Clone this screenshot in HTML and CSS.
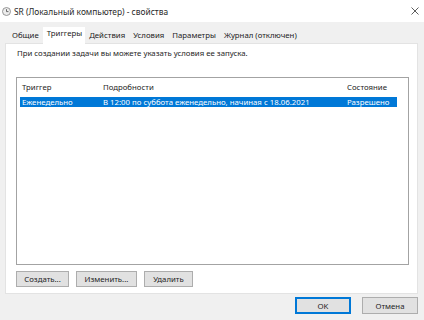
FILE: index.html
```html
<!DOCTYPE html>
<html lang="ru">
<head>
    <meta charset="UTF-8">
    <title>SR (Локальный компьютер) - свойства</title>
    <link rel="stylesheet" href="styles.css">
</head>
<body>
    <div class="window">
        <header class="titlebar">
            <svg class="app-icon" width="9" height="9" viewBox="0 0 9 9">
                <circle cx="4.5" cy="4.5" r="4" fill="#ececec" stroke="#8c8c8c" stroke-width="0.9"/>
                <path d="M4.5 2.2 V4.6 H6.5" fill="none" stroke="#5a5a5a" stroke-width="0.9"/>
            </svg>
            <span class="title">SR (Локальный компьютер) - свойства</span>
            <span class="close">
                <svg width="8" height="8" viewBox="0 0 8 8">
                    <path d="M0.5 0.5 L7.5 7.5 M7.5 0.5 L0.5 7.5" stroke="#333" stroke-width="0.8"/>
                </svg>
            </span>
        </header>

        <div class="content">
            <nav class="tabs">
                <span class="tab">Общие</span>
                <span class="tab active">Триггеры</span>
                <span class="tab">Действия</span>
                <span class="tab">Условия</span>
                <span class="tab">Параметры</span>
                <span class="tab">Журнал (отключен)</span>
            </nav>

            <section class="panel">
                <p class="hint">При создании задачи вы можете указать условия ее запуска.</p>

                <div class="listview">
                    <div class="row head">
                        <span class="col-trigger">Триггер</span>
                        <span class="col-details">Подробности</span>
                        <span class="col-state">Состояние</span>
                    </div>
                    <div class="row selected">
                        <span class="col-trigger">Еженедельно</span>
                        <span class="col-details">В 12:00 по суббота еженедельно, начиная с 18.06.2021</span>
                        <span class="col-state">Разрешено</span>
                    </div>
                </div>

                <div class="actions">
                    <button class="btn btn-create">Создать...</button>
                    <button class="btn btn-edit">Изменить...</button>
                    <button class="btn btn-delete">Удалить</button>
                </div>
            </section>

            <footer class="footer">
                <button class="btn btn-dialog default">OK</button>
                <button class="btn btn-dialog">Отмена</button>
            </footer>
        </div>
    </div>
</body>
</html>
```

FILE: styles.css
```css
/* General Styles */
body {
    margin: 0;
    padding: 0;
    font-family: 'Noto Sans', 'Open Sans', sans-serif;
    font-size: 7.8px;
    color: #1e1e1e;
    background-color: #f0f0f0;
}

.window {
    width: 424px;
    height: 320px;
    overflow: hidden;
    background-color: #f0f0f0;
}

/* Title bar */
.titlebar {
    height: 22px;
    background-color: #ffffff;
    display: flex;
    align-items: center;
    padding-left: 2px;
    box-sizing: border-box;
}

.app-icon {
    margin: 1px 3px 0 0;
}

.title {
    flex: 1;
    font-size: 8.4px;
    color: #2a2a2a;
}

.close {
    width: 8px;
    display: flex;
    margin-right: 5px;
}

/* Tabs */
.content {
    padding: 5px 6px 0 5px;
}

.tabs {
    display: flex;
    height: 16px;
    align-items: flex-end;
    padding-left: 3px;
}

.tab {
    padding: 0 4px;
    height: 14px;
    line-height: 13px;
    color: #222;
}

.tab.active {
    background-color: #ffffff;
    height: 17px;
    line-height: 13px;
    margin-bottom: -1px;
    padding: 0 3px 0 4px;
    position: relative;
    z-index: 1;
}

/* Tab panel */
.panel {
    background-color: #ffffff;
    border: 1px solid #e3e3e3;
    height: 251px;
    box-sizing: border-box;
    padding: 4px 8px 0 10px;
}

.hint {
    margin: 0 0 18px 1px;
    line-height: 11px;
}

.listview {
    height: 188px;
    border: 1px solid #a3a3a3;
    box-sizing: border-box;
    padding: 0 11px 0 3px;
}

.row {
    display: flex;
    white-space: nowrap;
}

.row.head {
    height: 19px;
    line-height: 19px;
}

.row.selected {
    height: 10px;
    line-height: 10px;
    background-color: #0078d7;
    color: #ffffff;
}

.col-trigger {
    width: 81px;
    padding-left: 2px;
}

.col-details {
    flex: 1;
}

.col-state {
    width: 50px;
}

/* Buttons */
.actions {
    display: flex;
    gap: 7px;
    margin-top: 6px;
}

.btn {
    font-family: inherit;
    font-size: 7.8px;
    color: #1e1e1e;
    background-color: #e1e1e1;
    border: 1px solid #adadad;
    height: 16px;
    padding: 0;
    line-height: 14px;
}

.btn-create {
    width: 53px;
}

.btn-edit {
    width: 61px;
}

.btn-delete {
    width: 49px;
}

.footer {
    display: flex;
    justify-content: flex-end;
    gap: 11px;
    padding-top: 3px;
}

.btn-dialog {
    width: 56px;
    height: 17px;
}

.btn-dialog.default {
    border: 1px solid #0078d7;
    box-shadow: inset 0 0 0 1px #0078d7;
}
```
